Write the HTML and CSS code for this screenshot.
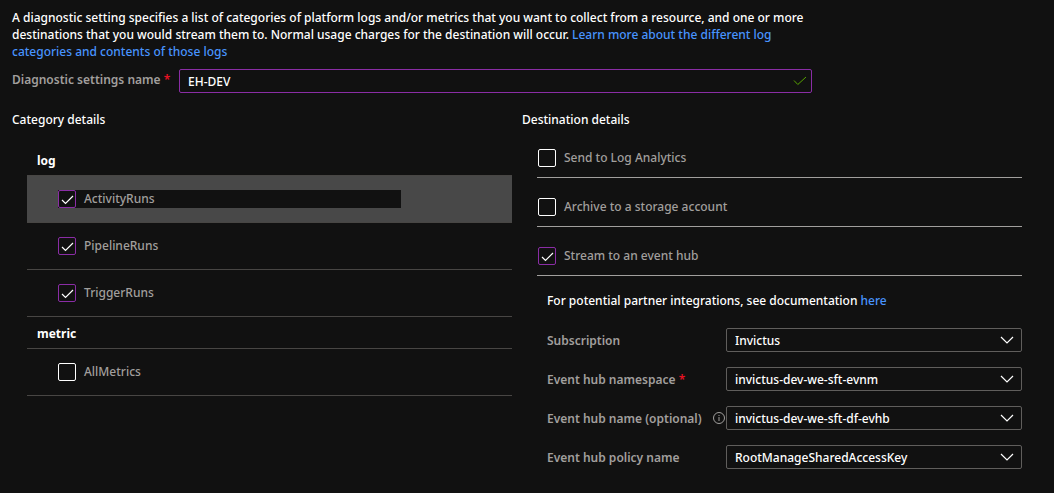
FILE: index.html
```
<!DOCTYPE html>
<html lang="en">
<head>
<meta charset="utf-8">
<meta name="viewport" content="width=device-width, initial-scale=1">
<title>Diagnostic setting</title>
<link rel="stylesheet" href="styles.css">
</head>
<body>
<main class="blade">
  <p class="intro">A diagnostic setting specifies a list of categories of platform logs and/or metrics that you want to collect from a resource, and one or more destinations that you would stream them to. Normal usage charges for the destination will occur. <a class="link" href="#">Learn more about the different log categories and contents of those logs</a></p>

  <div class="name-row">
    <label class="field-label" for="setting-name">Diagnostic settings name <span class="required">*</span></label>
    <div class="text-wrap">
      <input class="text-box" id="setting-name" type="text" value="EH-DEV">
      <svg class="valid" viewBox="0 0 14 10" aria-hidden="true"><path d="M1 4.5 4.8 8.5 13 1"/></svg>
    </div>
  </div>

  <div class="columns">
    <section class="column">
      <h2 class="title">Category details</h2>
      <div class="panel categories">
        <h3 class="group">log</h3>
        <ul class="rows">
          <li class="category active"><label class="option"><input class="check" type="checkbox" checked><span class="option-text">ActivityRuns</span></label></li>
          <li class="category"><label class="option"><input class="check" type="checkbox" checked><span class="option-text">PipelineRuns</span></label></li>
          <li class="category"><label class="option"><input class="check" type="checkbox" checked><span class="option-text">TriggerRuns</span></label></li>
        </ul>
        <h3 class="group">metric</h3>
        <ul class="rows">
          <li class="category"><label class="option"><input class="check" type="checkbox"><span class="option-text">AllMetrics</span></label></li>
        </ul>
      </div>
    </section>

    <section class="column">
      <h2 class="title">Destination details</h2>
      <div class="panel destinations">
        <ul class="rows">
          <li class="destination"><label class="option"><input class="check" type="checkbox"><span class="option-text">Send to Log Analytics</span></label></li>
          <li class="destination"><label class="option"><input class="check" type="checkbox"><span class="option-text">Archive to a storage account</span></label></li>
          <li class="destination"><label class="option"><input class="check" type="checkbox" checked><span class="option-text">Stream to an event hub</span></label></li>
        </ul>
        <div class="hub">
          <p class="note">For potential partner integrations, see documentation <a class="link" href="#">here</a></p>
          <div class="field">
            <label class="field-label" for="subscription">Subscription</label>
            <div class="select-wrap">
              <select class="select" id="subscription"><option>Invictus</option></select>
              <svg class="chevron" viewBox="0 0 14 8" aria-hidden="true"><path d="M1 1 7 7 13 1"/></svg>
            </div>
          </div>
          <div class="field">
            <label class="field-label" for="namespace">Event hub namespace <span class="required">*</span></label>
            <div class="select-wrap">
              <select class="select" id="namespace"><option>invictus-dev-we-sft-evnm</option></select>
              <svg class="chevron" viewBox="0 0 14 8" aria-hidden="true"><path d="M1 1 7 7 13 1"/></svg>
            </div>
          </div>
          <div class="field">
            <div class="label-cell">
              <label class="field-label" for="hub-name">Event hub name (optional)</label>
              <svg class="info" viewBox="0 0 12 12" aria-hidden="true"><circle cx="6" cy="6" r="5.5"/><path d="M6 5V9M6 3V4"/></svg>
            </div>
            <div class="select-wrap">
              <select class="select" id="hub-name"><option>invictus-dev-we-sft-df-evhb</option></select>
              <svg class="chevron" viewBox="0 0 14 8" aria-hidden="true"><path d="M1 1 7 7 13 1"/></svg>
            </div>
          </div>
          <div class="field">
            <label class="field-label" for="policy">Event hub policy name</label>
            <div class="select-wrap">
              <select class="select" id="policy"><option>RootManageSharedAccessKey</option></select>
              <svg class="chevron" viewBox="0 0 14 8" aria-hidden="true"><path d="M1 1 7 7 13 1"/></svg>
            </div>
          </div>
        </div>
      </div>
    </section>
  </div>
</main>
</body>
</html>
```
FILE: styles.css
```
* {
  box-sizing: border-box;
}

body {
  margin: 0;
  background: #111;
  color: #fff;
  font: 500 12px/17px "Segoe UI", "Noto Sans", "Open Sans", sans-serif;
}

h2, h3, p, ul {
  margin: 0;
  padding: 0;
}

.blade {
  padding: 9px 32px 20px 12px;
}

.intro {
  max-width: 800px;
}

.link {
  color: #4894fe;
  text-decoration: none;
}

.name-row {
  display: flex;
  gap: 8px;
  max-width: 800px;
  margin-top: 9px;
}

.name-row .field-label {
  flex: 0 0 159px;
  padding-top: 2px;
}

.field-label {
  color: #a19f9d;
  font-weight: 600;
  white-space: nowrap;
}

.required {
  color: #e81123;
}

.text-wrap,
.select-wrap {
  position: relative;
  flex: 1;
  display: flex;
}

.text-box,
.select {
  width: 100%;
  height: 24px;
  padding: 0 8px;
  border: 1px solid #605e5c;
  border-radius: 2px;
  background: #111;
  color: #fff;
  font: inherit;
  appearance: none;
}

.text-box {
  border-color: #8a2da5;
}

.valid,
.chevron {
  position: absolute;
  top: 0;
  bottom: 0;
  margin: auto 0;
  fill: none;
  pointer-events: none;
}

.valid {
  right: 5px;
  width: 14px;
  height: 10px;
  stroke: #57a300;
}

.chevron {
  right: 8px;
  width: 14px;
  height: 8px;
  stroke: #fff;
  stroke-width: 1.2;
}

.columns {
  display: grid;
  grid-template-columns: 1fr 1fr;
  gap: 10px;
  margin-top: 18px;
}

.title {
  font-size: 12px;
  font-weight: 500;
}

.column {
  min-width: 0;
}

.panel {
  padding-left: 15px;
}

.categories {
  padding-top: 16px;
}

.destinations {
  padding-top: 1px;
}

.category,
.destination {
  display: block;
  border-bottom: 1px solid #484644;
}

.group {
  height: 32px;
  padding: 8px 10px 0;
  border-bottom: 1px solid #484644;
  font-size: 12px;
  font-weight: 700;
}

.category {
  padding: 14px 111px 14px 31px;
}

.active {
  background: #484848;
}

.destination {
  padding: 20px 1px 10px;
  border-color: #a19f9d;
}

.option {
  display: flex;
  gap: 8px;
  background: #111;
  color: #a19f9d;
}

.check {
  flex: none;
  width: 18px;
  height: 18px;
  margin: 0;
  border: 1px solid #fff;
  border-radius: 2px;
  background: #111;
  appearance: none;
}

.check:checked {
  border-color: #8a2da5;
  background: #111 url("data:image/svg+xml,%3Csvg xmlns='http://www.w3.org/2000/svg' viewBox='0 0 16 16' fill='none' stroke='white' stroke-width='1.2'%3E%3Cpath d='M3 9 6.5 12.5 14 5'/%3E%3C/svg%3E") center / 16px 16px no-repeat;
}

.hub {
  padding: 16px 0 0 10px;
}

.note {
  margin-bottom: 19px;
}

.field {
  display: grid;
  grid-template-columns: 179px minmax(0, 1fr);
  align-items: center;
}

.field + .field {
  margin-top: 15px;
}

.label-cell {
  display: flex;
  align-items: center;
  justify-content: space-between;
  padding-right: 1px;
}

.info {
  width: 12px;
  height: 12px;
  fill: none;
  stroke: #a19f9d;
}
```
